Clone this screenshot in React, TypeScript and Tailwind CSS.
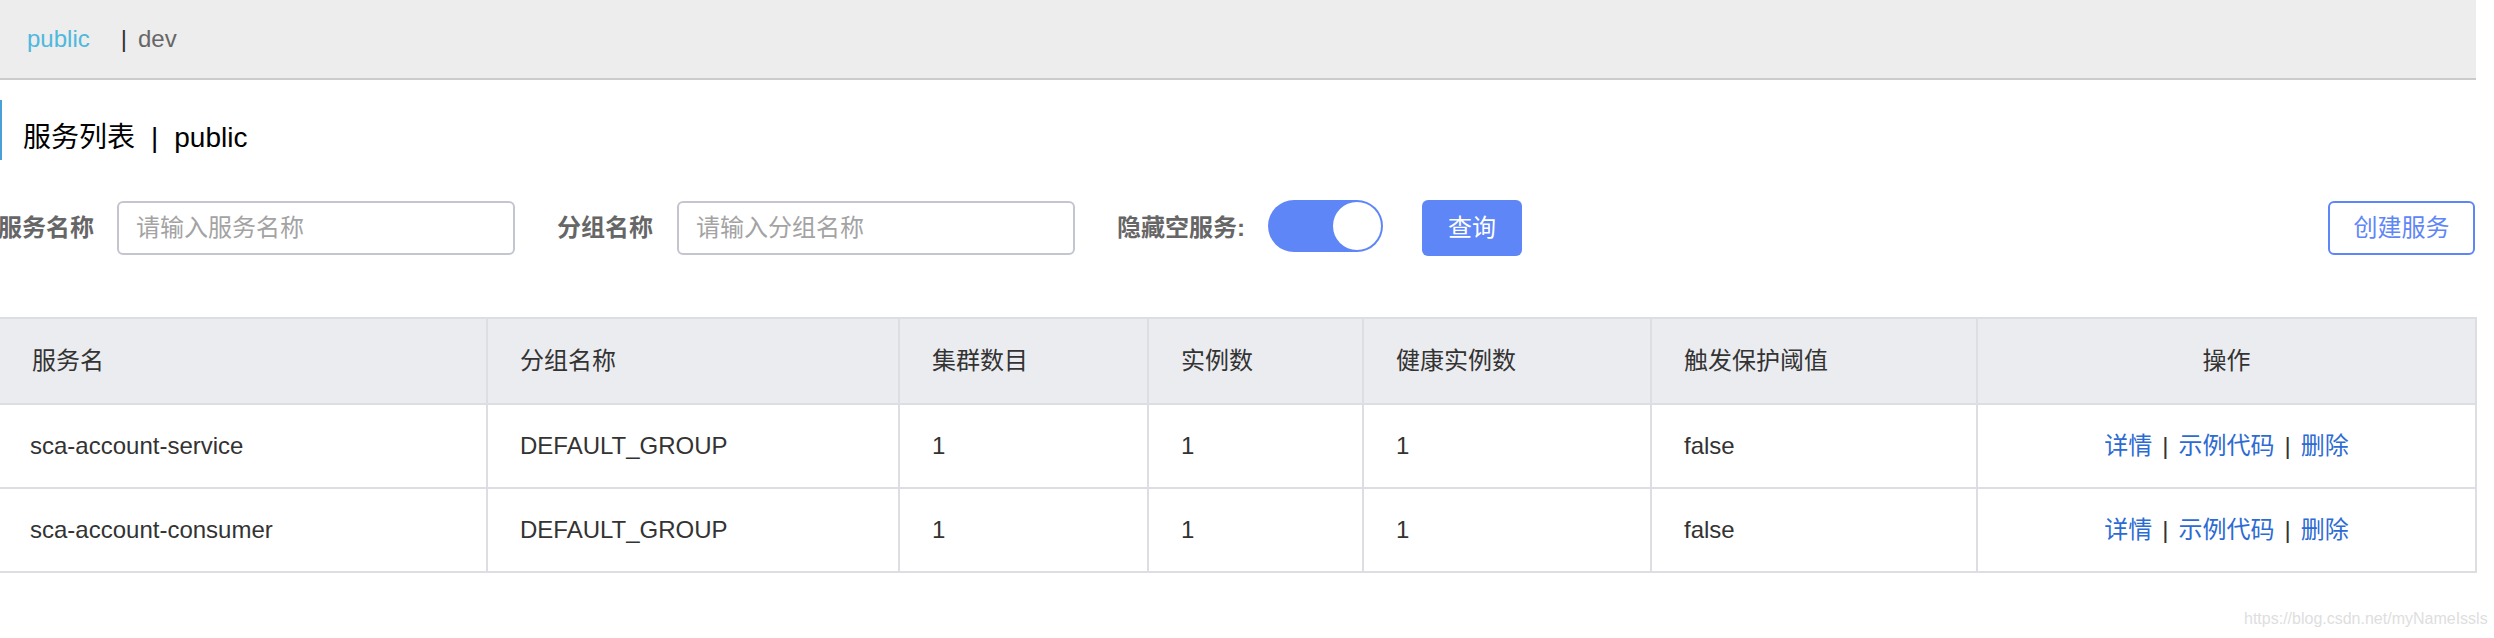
import React from "react";

const columns = [
  { key: "name", title: "服务名", width: 487 },
  { key: "group", title: "分组名称", width: 412 },
  { key: "clusters", title: "集群数目", width: 249 },
  { key: "instances", title: "实例数", width: 215 },
  { key: "healthy", title: "健康实例数", width: 288 },
  { key: "threshold", title: "触发保护阈值", width: 326 },
];

const services = [
  { name: "sca-account-service", group: "DEFAULT_GROUP", clusters: 1, instances: 1, healthy: 1, threshold: "false" },
  { name: "sca-account-consumer", group: "DEFAULT_GROUP", clusters: 1, instances: 1, healthy: 1, threshold: "false" },
];

const cellBorder = "border-2 border-[#dcdee3]";

const Actions: React.FC = () => (
  <span className="text-[#2d6bd3]">
    <a className="cursor-pointer">详情</a>
    <span className="mx-[10px] text-[#333]">|</span>
    <a className="cursor-pointer">示例代码</a>
    <span className="mx-[10px] text-[#333]">|</span>
    <a className="cursor-pointer">删除</a>
  </span>
);

export default function App() {
  return (
    <div className="relative h-[638px] w-full overflow-hidden bg-white text-[#333] [font-family:'Liberation_Sans','Noto_Sans_CJK_SC',sans-serif]">
      {/* namespace bar */}
      <div className="flex h-[80px] w-[2476px] items-center border-b-2 border-[#cbcbcb] bg-[#ededed] pl-[27px] text-[24px]">
        <span className="text-[#4fb8dd]">public</span>
        <span className="ml-[31px] text-[#333]">|</span>
        <span className="ml-[11px] text-[#666]">dev</span>
      </div>

      {/* page title */}
      <div className="mt-[20px] flex h-[60px] items-center border-l-2 border-[#4a9fd6] pl-[21px] pt-[16px] text-[28px] text-black">
        <span>服务列表</span>
        <span className="mx-[16px]">|</span>
        <span>public</span>
      </div>

      {/* filters */}
      <div className="mt-[40px] flex w-[2476px] items-start justify-between pr-[1px]">
        <div className="flex items-start text-[24px]">
          <label className="ml-[-2px] mt-[1px] flex h-[54px] items-center font-bold text-[#666]">服务名称</label>
          <input
            placeholder="请输入服务名称"
            className="ml-[23px] mt-[1px] h-[54px] w-[398px] rounded-[6px] border-2 border-[#c4c6cf] px-[17px] text-[24px] outline-none placeholder:text-[#a3a3a3]"
          />
          <label className="ml-[42px] mt-[1px] flex h-[54px] items-center font-bold text-[#666]">分组名称</label>
          <input
            placeholder="请输入分组名称"
            className="ml-[24px] mt-[1px] h-[54px] w-[398px] rounded-[6px] border-2 border-[#c4c6cf] px-[17px] text-[24px] outline-none placeholder:text-[#a3a3a3]"
          />
          <label className="ml-[42px] mt-[1px] flex h-[54px] items-center font-bold text-[#666]">隐藏空服务:</label>
          <button className="ml-[23px] flex h-[52px] w-[115px] items-center justify-end rounded-full bg-[#5f86f7] p-[2px]">
            <span className="h-[48px] w-[48px] rounded-full bg-white" />
          </button>
          <button className="ml-[39px] h-[56px] w-[100px] rounded-[6px] bg-[#5f86f7] text-[24px] text-white">
            查询
          </button>
        </div>
        <button className="mt-[1px] h-[54px] w-[147px] rounded-[6px] border-2 border-[#5f86f7] bg-white text-[24px] text-[#5f86f7]">
          创建服务
        </button>
      </div>

      {/* service table */}
      <table className="mt-[61px] w-[2476px] table-fixed border-collapse text-[24px]">
        <colgroup>
          {columns.map((c) => (
            <col key={c.key} style={{ width: c.width }} />
          ))}
          <col style={{ width: 499 }} />
        </colgroup>
        <thead>
          <tr className="h-[86px] bg-[#ebecf0]">
            {columns.map((c, i) => (
              <th
                key={c.key}
                className={`${cellBorder} ${i === 0 ? "border-l-0" : ""} px-[32px] text-left font-normal`}
              >
                {c.title}
              </th>
            ))}
            <th className={`${cellBorder} text-center font-normal`}>操作</th>
          </tr>
        </thead>
        <tbody>
          {services.map((s) => (
            <tr key={s.name} className="h-[84px]">
              <td className={`${cellBorder} border-l-0 px-[30px]`}>{s.name}</td>
              <td className={`${cellBorder} px-[32px]`}>{s.group}</td>
              <td className={`${cellBorder} px-[32px]`}>{s.clusters}</td>
              <td className={`${cellBorder} px-[32px]`}>{s.instances}</td>
              <td className={`${cellBorder} px-[32px]`}>{s.healthy}</td>
              <td className={`${cellBorder} px-[32px]`}>{s.threshold}</td>
              <td className={`${cellBorder} text-center`}>
                <Actions />
              </td>
            </tr>
          ))}
        </tbody>
      </table>

      {/* watermark */}
      <div className="absolute left-[2244px] top-[607px] whitespace-nowrap text-[16px] text-[#dedede]">
        https://blog.csdn.net/myNameIssls
      </div>
    </div>
  );
}
